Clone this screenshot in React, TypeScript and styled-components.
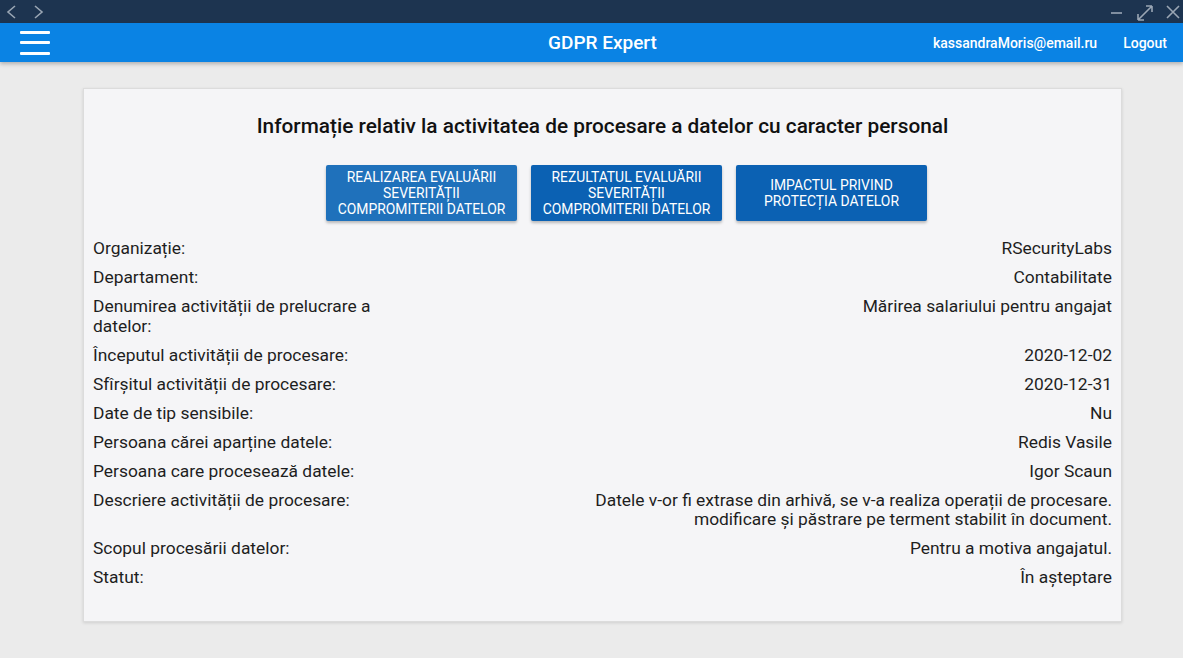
import React from 'react'
import styled, { createGlobalStyle } from 'styled-components'

const GlobalStyle = createGlobalStyle`
  body {
    margin: 0;
    background: #ebebeb;
    font-family: Roboto, "Noto Sans", sans-serif;
  }
`

const Page = styled.div`
  min-height: 100vh;
  display: flex;
  flex-direction: column;
`

const TitleBar = styled.div`
  height: 23px;
  background: #1d3450;
  display: flex;
  align-items: center;
  justify-content: space-between;
  padding: 0 2px 0 4px;
`

const WinGroup = styled.div`
  display: flex;
  align-items: center;
  gap: 10px;
`

const AppBar = styled.header`
  height: 39px;
  background: #0a83e4;
  display: flex;
  align-items: center;
  padding: 0 16px 0 20px;
  color: #fff;
  box-shadow: 0 2px 4px rgba(0, 0, 0, 0.25);
  position: relative;
  z-index: 1;
`

const Burger = styled.button`
  width: 30px;
  height: 24px;
  padding: 0;
  border: 0;
  background: transparent;
  display: flex;
  flex-direction: column;
  justify-content: space-between;
  cursor: pointer;
  span {
    display: block;
    height: 3px;
    background: #fff;
    border-radius: 1px;
  }
`

const BarTitle = styled.div`
  flex: 1;
  text-align: center;
  font-size: 19px;
  font-weight: 500;
  padding-left: 222px;
`

const UserArea = styled.div`
  display: flex;
  align-items: center;
  gap: 26px;
  font-size: 14px;
  font-weight: 500;
`

const Main = styled.main`
  padding: 26px 0 36px 83px;
`

const Card = styled.section`
  width: 1039px;
  box-sizing: border-box;
  background: #f5f5f7;
  border: 1px solid #dcdcdc;
  box-shadow: 0 1px 3px rgba(0, 0, 0, 0.12);
  padding: 24px 9px 33px;
  color: #1e1e1e;
`

const Heading = styled.h2`
  margin: 0;
  text-align: center;
  font-size: 20.8px;
  font-weight: 500;
  line-height: 26px;
  color: #111;
`

const ButtonRow = styled.div`
  display: flex;
  justify-content: center;
  gap: 14px;
  margin: 26px 0 18px;
  padding-left: 48px;
`

const ActionButton = styled.button<{ $active?: boolean }>`
  width: 191px;
  height: 56px;
  border: 0;
  border-radius: 2px;
  background: ${p => (p.$active ? '#1f71bb' : '#0b61b3')};
  color: #fff;
  font-family: Roboto, sans-serif;
  font-size: 13.9px;
  line-height: 16px;
  text-transform: uppercase;
  padding: 4px 6px;
  box-shadow: 0 2px 3px rgba(0, 0, 0, 0.25);
  cursor: pointer;
`

const InfoList = styled.dl`
  margin: 0;
  display: flex;
  flex-direction: column;
  gap: 9.5px;
`

const InfoRow = styled.div`
  display: flex;
  justify-content: space-between;
  font-size: 17.4px;
  line-height: 19.5px;
`

const Label = styled.dt`
  width: 320px;
  margin: 0;
`

const Value = styled.dd`
  margin: 0;
  text-align: right;
  max-width: 660px;
`

const rows: { label: string; value: React.ReactNode }[] = [
  { label: 'Organizație:', value: 'RSecurityLabs' },
  { label: 'Departament:', value: 'Contabilitate' },
  { label: 'Denumirea activității de prelucrare a datelor:', value: 'Mărirea salariului pentru angajat' },
  { label: 'Începutul activității de procesare:', value: '2020-12-02' },
  { label: 'Sfîrșitul activității de procesare:', value: '2020-12-31' },
  { label: 'Date de tip sensibile:', value: 'Nu' },
  { label: 'Persoana cărei aparține datele:', value: 'Redis Vasile' },
  { label: 'Persoana care procesează datele:', value: 'Igor Scaun' },
  {
    label: 'Descriere activității de procesare:',
    value: (
      <>
        Datele v-or fi extrase din arhivă, se v-a realiza operații de procesare.
        <br />
        modificare și păstrare pe terment stabilit în document.
      </>
    ),
  },
  { label: 'Scopul procesării datelor:', value: 'Pentru a motiva angajatul.' },
  { label: 'Statut:', value: 'În așteptare' },
]

const WinIcon = ({ d, w = 16 }: { d: string; w?: number }) => (
  <svg width={w} height="18" viewBox={`0 0 ${w} 18`} fill="none" stroke="#9aa6b4" strokeWidth="1.6">
    <path d={d} />
  </svg>
)

const App = () => (
  <Page>
    <GlobalStyle />
    <TitleBar>
      <WinGroup>
        <WinIcon d="M11 3 L4 9 L11 15" />
        <WinIcon d="M5 3 L12 9 L5 15" />
      </WinGroup>
      <WinGroup>
        <WinIcon d="M2 10 H13" />
        <WinIcon w={20} d="M3 17 L17 3 M3 17 H9 M3 17 V11 M17 3 H11 M17 3 V9" />
        <WinIcon d="M2 3 L14 15 M14 3 L2 15" />
      </WinGroup>
    </TitleBar>
    <AppBar>
      <Burger aria-label="menu">
        <span />
        <span />
        <span />
      </Burger>
      <BarTitle>GDPR Expert</BarTitle>
      <UserArea>
        <span>kassandraMoris@email.ru</span>
        <span>Logout</span>
      </UserArea>
    </AppBar>
    <Main>
      <Card>
        <Heading>Informație relativ la activitatea de procesare a datelor cu caracter personal</Heading>
        <ButtonRow>
          <ActionButton $active>Realizarea evaluării severității compromiterii datelor</ActionButton>
          <ActionButton>Rezultatul evaluării severității compromiterii datelor</ActionButton>
          <ActionButton>Impactul privind protecția datelor</ActionButton>
        </ButtonRow>
        <InfoList>
          {rows.map(r => (
            <InfoRow key={r.label}>
              <Label>{r.label}</Label>
              <Value>{r.value}</Value>
            </InfoRow>
          ))}
        </InfoList>
      </Card>
    </Main>
  </Page>
)

export default App
